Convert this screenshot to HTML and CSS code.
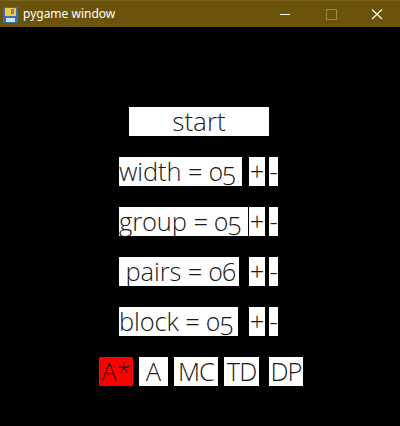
FILE: index.html
```html
<!DOCTYPE html>
<html>
<head>
<meta charset="utf-8">
<link rel="stylesheet" href="styles.css">
</head>
<body>
<div class="titlebar">
  <svg class="appicon" width="15" height="16" viewBox="0 0 15 16">
    <rect x="0" y="0" width="15" height="16" rx="1" fill="#3b6fb5"/>
    <rect x="2" y="1" width="11" height="8" fill="#f2c744"/>
    <rect x="8" y="2" width="3" height="5" fill="#5b87c9"/>
    <rect x="3" y="11" width="9" height="4" fill="#d8e2ef"/>
  </svg>
  <span class="title">pygame window</span>
  <div class="controls">
    <svg class="ctl" width="46" height="27" viewBox="0 0 46 27"><line x1="18" y1="14.5" x2="28" y2="14.5" stroke="#fff" stroke-width="1"/></svg>
    <svg class="ctl" width="46" height="27" viewBox="0 0 46 27"><rect x="18.5" y="9.5" width="10" height="10" fill="none" stroke="#9c8752" stroke-width="1"/></svg>
    <svg class="ctl" width="46" height="27" viewBox="0 0 46 27"><path d="M18 9.5 L28 19 M28 9.5 L18 19" stroke="#fff" stroke-width="1.1"/></svg>
  </div>
</div>
<div class="screen">
  <div class="row start-row"><div class="box start">start</div></div>
  <div class="row setting">
    <div class="box label w-width">width = 05</div>
    <div class="box plus">+</div>
    <div class="box minus">-</div>
  </div>
  <div class="row setting">
    <div class="box label w-group">group = 05</div>
    <div class="box plus">+</div>
    <div class="box minus">-</div>
  </div>
  <div class="row setting">
    <div class="box label w-pairs">&nbsp;pairs = 06</div>
    <div class="box plus">+</div>
    <div class="box minus">-</div>
  </div>
  <div class="row setting">
    <div class="box label w-block">block = 05</div>
    <div class="box plus">+</div>
    <div class="box minus">-</div>
  </div>
  <div class="row algos">
    <div class="box algo a-star active">A*</div>
    <div class="box algo a-a">A</div>
    <div class="box algo a-mc">MC</div>
    <div class="box algo a-td">TD</div>
    <div class="box algo a-dp">DP</div>
  </div>
</div>
</body>
</html>
```
FILE: styles.css
```css
html, body {
  margin: 0;
  padding: 0;
  background: #000;
  width: 400px;
  height: 426px;
  overflow: hidden;
}
.titlebar {
  height: 27px;
  background: #6b530b;
  display: flex;
  align-items: center;
  box-sizing: border-box;
  border-top: 1px solid #7a6420;
}
.appicon {
  margin-left: 3px;
  margin-top: 1px;
  flex: none;
}
.title {
  margin-left: 5px;
  color: #fff;
  font-family: "Noto Sans", "DejaVu Sans", sans-serif;
  font-size: 12px;
  flex: 1;
  margin-top: -1px;
}
.controls {
  display: flex;
  align-self: stretch;
  margin-top: -1px;
}
.ctl { display: block; }
.screen {
  display: flex;
  flex-direction: column;
  gap: 21px;
  padding-top: 80px;
  font-family: "Open Sans", "Noto Sans", sans-serif;
  font-weight: 300;
  font-feature-settings: "onum" 1;
  font-variant-numeric: oldstyle-nums;
}
.row {
  display: flex;
  height: 29px;
}
.box {
  background: #fff;
  color: #1a1a1a;
  height: 29px;
  line-height: 29px;
  font-size: 25.5px;
  text-align: center;
  white-space: nowrap;
  box-sizing: border-box;
}
.start-row { padding-left: 129px; }
.start { width: 140px; font-size: 26px; }
.setting {
  display: grid;
  grid-template-columns: 130px 20px 9px;
  padding-left: 119px;
}
.label { justify-self: start; text-align: left; letter-spacing: -0.1px; }
.w-width { width: 123px; }
.w-group { width: 129px; }
.w-pairs { width: 120px; }
.w-block { width: 119px; }
.plus { width: 16px; }
.minus { width: 9px; }
.algos {
  padding-left: 99px;
  gap: 6px;
}
.active { background: #ff0000; }
.a-star { width: 34px; }
.a-a { width: 29px; }
.a-mc { width: 44px; letter-spacing: -1px; }
.a-td { width: 35px; letter-spacing: -1px; }
.a-dp { width: 34px; margin-left: 4px; letter-spacing: -1px; }
```
